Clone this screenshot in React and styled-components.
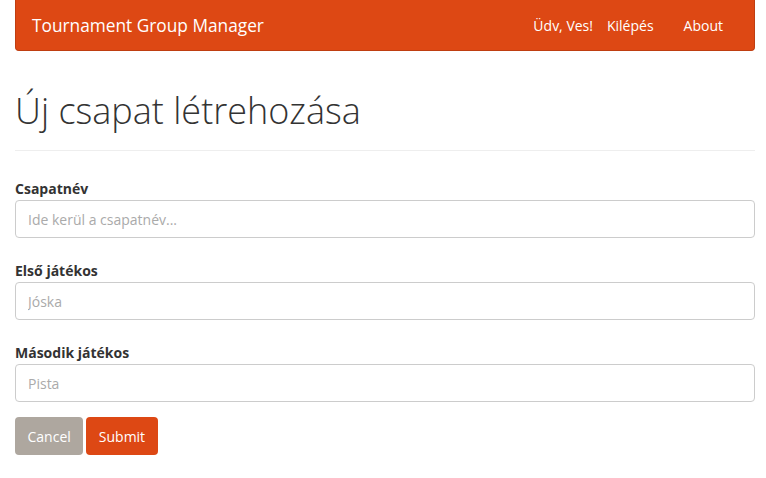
import styled, { createGlobalStyle } from "styled-components";

const Global = createGlobalStyle`
  body {
    margin: 0;
    background: #fff;
    font-family: "Open Sans", "Noto Sans", sans-serif;
    font-size: 14px;
    color: #333;
  }
  * { box-sizing: border-box; }
`;

const Page = styled.div`
  padding: 0 11px 0 15px;
`;

const Navbar = styled.nav`
  height: 51px;
  background: #dd4814;
  border: 1px solid #bf3e11;
  border-top: none;
  border-radius: 0 0 4px 4px;
  display: flex;
  align-items: center;
  justify-content: space-between;
  padding: 0 31px 0 16px;
  color: #fff;
`;

const Brand = styled.a`
  font-size: 17.3px;
  color: #fff;
  text-decoration: none;
`;

const NavRight = styled.div`
  display: flex;
  align-items: center;
`;

const NavLink = styled.a`
  color: #fff;
  font-size: 14px;
  text-decoration: none;
  margin-left: ${(p) => p.$gap || 0}px;
`;

const Header = styled.div`
  margin-top: 40px;
  padding-bottom: 9px;
  margin-bottom: 20px;
  border-bottom: 1px solid #eee;
`;

const Title = styled.h1`
  margin: 0 0 10.5px;
  font-size: 36px;
  font-weight: 300;
  line-height: 1.1;
  color: #333;
`;

const Group = styled.div`
  padding-top: 8px;
  margin-bottom: 15px;
`;

const Label = styled.label`
  display: block;
  font-weight: 700;
  line-height: 20px;
  margin-bottom: 1px;
`;

const Input = styled.input`
  display: block;
  width: 100%;
  height: 38px;
  padding: 8px 12px;
  font-family: inherit;
  font-size: 14px;
  color: #333;
  border: 1px solid #ccc;
  border-radius: 4px;
  outline: none;
  &::placeholder { color: #aaa; }
`;

const Actions = styled.div`
  display: flex;
  gap: 3px;
`;

const Button = styled.button`
  height: 38px;
  padding: 0 12.5px;
  font-family: inherit;
  font-size: 14px;
  color: #fff;
  border: none;
  border-radius: 4px;
  background: ${(p) => (p.$primary ? "#dd4814" : "#aea79f")};
`;

export default function App() {
  return (
    <>
      <Global />
      <Page>
        <Navbar>
          <Brand>Tournament Group Manager</Brand>
          <NavRight>
            <NavLink>Üdv, Ves!</NavLink>
            <NavLink $gap={14}>Kilépés</NavLink>
            <NavLink $gap={30}>About</NavLink>
          </NavRight>
        </Navbar>
        <Header>
          <Title>Új csapat létrehozása</Title>
        </Header>
        <form>
          <Group>
            <Label>Csapatnév</Label>
            <Input placeholder="Ide kerül a csapatnév..." />
          </Group>
          <Group>
            <Label>Első játékos</Label>
            <Input placeholder="Jóska" />
          </Group>
          <Group>
            <Label>Második játékos</Label>
            <Input placeholder="Pista" />
          </Group>
          <Actions>
            <Button type="button">Cancel</Button>
            <Button type="submit" $primary>Submit</Button>
          </Actions>
        </form>
      </Page>
    </>
  );
}
